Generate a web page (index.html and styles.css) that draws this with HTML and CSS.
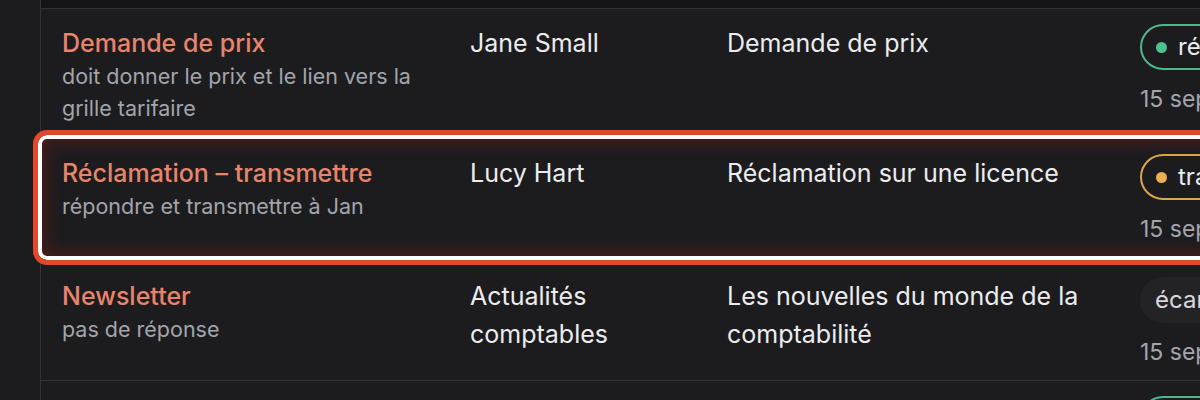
FILE: index.html
```html
<!DOCTYPE html>
<html lang="fr">
<head>
  <meta charset="UTF-8" />
  <meta name="viewport" content="width=device-width, initial-scale=1.0"/>
  <title>Règles de réponse</title>
  <link rel="stylesheet" href="styles.css">
</head>
<body>

  <div class="page">
    <div class="table">
      <div class="table-head"></div>

      <div class="row">
        <div class="cell rule">
          <div class="rule-title">Demande de prix</div>
          <div class="rule-desc">doit donner le prix et le lien vers la grille tarifaire</div>
        </div>
        <div class="cell">Jane Small</div>
        <div class="cell">Demande de prix</div>
        <div class="cell status">
          <span class="badge badge-green"><span class="dot"></span>répondu</span>
          <div class="date">15 sept. 2024</div>
        </div>
      </div>

      <div class="row row-focus">
        <div class="cell rule">
          <div class="rule-title">Réclamation – transmettre</div>
          <div class="rule-desc">répondre et transmettre à Jan</div>
        </div>
        <div class="cell">Lucy Hart</div>
        <div class="cell">Réclamation sur une licence</div>
        <div class="cell status">
          <span class="badge badge-yellow"><span class="dot"></span>transmis</span>
          <div class="date">15 sept. 2024</div>
        </div>
        <div class="spotlight"></div>
      </div>

      <div class="row">
        <div class="cell rule">
          <div class="rule-title">Newsletter</div>
          <div class="rule-desc">pas de réponse</div>
        </div>
        <div class="cell">Actualités comptables</div>
        <div class="cell">Les nouvelles du monde de la comptabilité</div>
        <div class="cell status">
          <span class="badge badge-muted">écarté</span>
          <div class="date">15 sept. 2024</div>
        </div>
      </div>

      <div class="row">
        <div class="cell rule">
          <div class="rule-title">Facture</div>
          <div class="rule-desc">envoyer la facture en pièce jointe</div>
        </div>
        <div class="cell">Tom Brown</div>
        <div class="cell">Facture manquante</div>
        <div class="cell status">
          <span class="badge badge-green"><span class="dot"></span>répondu</span>
        </div>
      </div>
    </div>
  </div>

</body>
</html>
```

FILE: styles.css
```css
:root {
  --bg: #1c1c1f;
  --head: #141417;
  --line: #333337;
  --accent: #e8846c;
  --muted: #a2a5ac;
  --text: #ececee;
}

body {
  margin: 0;
  background: var(--bg);
  font-family: Inter, 'Noto Sans', sans-serif;
  color: var(--text);
  overflow: hidden;
}

.page {
  padding-left: 40px;
}

.table {
  border-left: 1px solid var(--line);
  min-width: 1300px;
}

.table-head {
  height: 8px;
  background: var(--head);
  border-bottom: 1px solid var(--line);
}

.row {
  position: relative;
  display: grid;
  grid-template-columns: 409px 257px 413px 1fr;
  border-bottom: 1px solid var(--line);
}

.row-focus {
  border-bottom: none;
}

.cell {
  padding: 15px 20px 14px 20px;
  font-size: 25px;
  line-height: 38px;
}

.rule {
  padding-top: 17px;
  padding-left: 21px;
}

.rule-title {
  color: var(--accent);
  font-weight: 500;
  line-height: 34px;
}

.rule-desc {
  color: var(--muted);
  font-size: 21.5px;
  line-height: 32px;
}

.status {
  padding-top: 15px;
  padding-bottom: 12px;
  white-space: nowrap;
}

.row-focus .status {
  padding-bottom: 17px;
}

.badge {
  display: inline-flex;
  align-items: center;
  gap: 11px;
  height: 42px;
  padding: 0 18px 0 14px;
  border-radius: 24px;
  border: 2px solid transparent;
  font-size: 24px;
}

.badge .dot {
  width: 11px;
  height: 11px;
  border-radius: 50%;
}

.badge-green {
  border-color: #4fb88b;
}

.badge-green .dot {
  background: #4cc28e;
}

.badge-yellow {
  border-color: #d9a74c;
}

.badge-yellow .dot {
  background: #eab04d;
}

.badge-muted {
  background: #232326;
  color: #d8d8dc;
  border-color: #232326;
  padding-left: 13px;
}

.date {
  margin-top: 13px;
  color: var(--muted);
  font-size: 23px;
  line-height: 32px;
}

/* cadre de mise en avant posé sur la ligne */
.spotlight {
  position: absolute;
  top: -9px;
  bottom: -3px;
  left: -8px;
  right: -20px;
  border: 5px solid #e0482b;
  border-radius: 14px;
  box-shadow: inset 0 0 0 4px #fff, inset 0 0 16px 8px rgba(110, 30, 22, 0.55);
  pointer-events: none;
}
```
